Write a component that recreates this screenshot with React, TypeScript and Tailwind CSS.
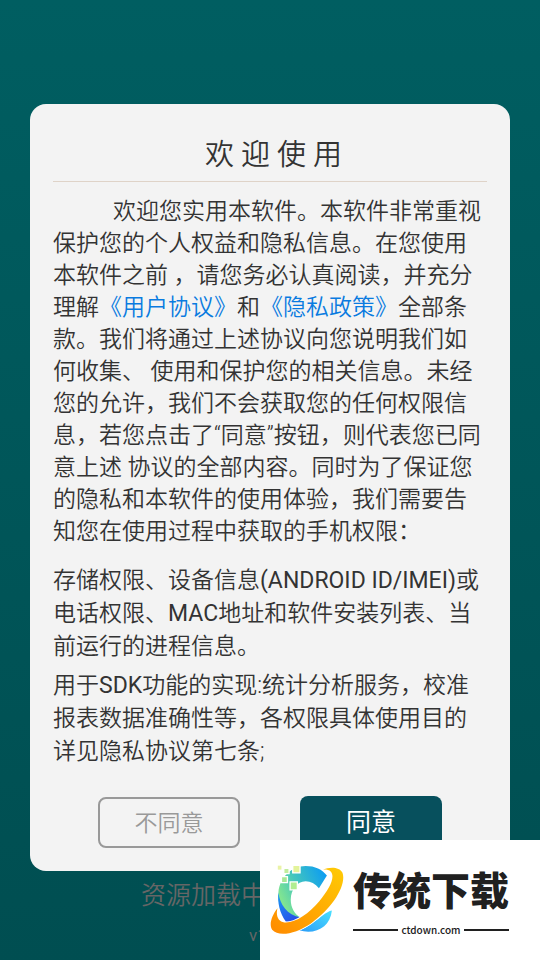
function BrandMark() {
  return (
    <svg viewBox="0 0 240 220" className="h-[73px] w-20 shrink-0" aria-hidden="true">
      <defs>
        <linearGradient id="ring" x1="0" y1="1" x2="1" y2="0">
          <stop offset="0" stopColor="#ff8a00" />
          <stop offset="1" stopColor="#ffcb05" />
        </linearGradient>
        <linearGradient id="arc" x1="0" y1="0.7" x2="1" y2="0.2">
          <stop offset="0" stopColor="#90ec86" />
          <stop offset="0.45" stopColor="#43c6bd" />
          <stop offset="1" stopColor="#0d9df2" />
        </linearGradient>
        <linearGradient id="shade" x1="0" y1="0" x2="0.6" y2="1">
          <stop offset="0" stopColor="#1b9cf4" />
          <stop offset="1" stopColor="#2650e8" />
        </linearGradient>
        <linearGradient id="tail" x1="0" y1="1" x2="1" y2="0">
          <stop offset="0" stopColor="#2b9cf8" />
          <stop offset="1" stopColor="#4be0ff" />
        </linearGradient>
      </defs>
      <path d="M34 84C38 42 72 6 116 6C144 6 166 16 180 35L156 73C145 59 131 52 116 52C89 53 72 77 71 107C71 132 83 152 101 162L72 172C44 150 30 120 34 84Z" fill="url(#arc)" />
      <path d="M34 86C38 122 60 154 101 161C86 172 70 176 56 173C38 149 30 114 34 86Z" fill="url(#shade)" />
      <path d="M195 140C179 143 158 162 138 177C122 189 109 196 96 200C145 214 190 191 195 140Z" fill="url(#tail)" />
      <path d="M166 17C190 8 217 8 227 26C240 65 196 134 132 179C86 210 35 221 15 198C5 183 13 156 31 133C25 157 34 174 52 176C83 179 126 149 157 112C187 76 206 40 192 23C186 17 176 16 166 17Z" fill="url(#ring)" stroke="#fff" strokeWidth="5" paintOrder="stroke" />
      <g stroke="#fff" strokeWidth="4">
        <path d="M77 4h22v23H77z" fill="#e3f39a" />
        <path d="M50 13h16v16H50z" fill="#c1ed9d" />
        <path d="M43 38h18v18H43z" fill="#a8e896" />
        <path d="M69 54h22v24H69z" fill="#b1ed91" />
      </g>
      <path d="M32 5h11v12H32z" fill="#eaf3a6" />
    </svg>
  );
}

function Watermark() {
  return (
    <aside className="absolute right-0 bottom-0 flex h-[120px] w-[280px] items-center bg-white pl-[7px]">
      <BrandMark />
      <div className="ml-[6px] w-[156px] shrink-0 pt-[6px] text-[#202020]">
        <div className="text-center text-[39px] leading-[48px] font-black">传统下载</div>
        <div className="mt-[6px] flex items-center gap-[3px]">
          <span className="h-[2px] flex-1 bg-[#202020]" />
          <span className="font-['Noto_Sans_CJK_SC',sans-serif] text-[10px] leading-4 font-medium">ctdown.com</span>
          <span className="h-[2px] flex-1 bg-[#202020]" />
        </div>
      </div>
    </aside>
  );
}

export default function App() {
  return (
    <div
      lang="zh-CN"
      className="relative min-h-screen bg-linear-to-b from-[#005e61] to-[#004e51] px-[30px] pt-[104px] font-[Roboto,'Noto_Sans_CJK_SC',sans-serif] font-[350] text-[#333]"
    >
      <main className="rounded-2xl bg-[#f3f3f3] px-[23px] pt-[29px] pb-[23px]">
        <h1 className="border-b border-[#dfd3c8] pb-[3px] text-center text-[29px] leading-[45px] font-[350] whitespace-pre">
          {" 欢 迎 使 用"}
        </h1>
        <div className="text-[23px] leading-8">
          <p className="mt-[14px] indent-[60px]">
            欢迎您实用本软件。本软件非常重视保护您的个人权益和隐私信息。在您使用本软件之前 ，请您务必认真阅读，并充分理解
            <a href="#agreement" className="text-[#0a7be0]">《用户协议》</a>和
            <a href="#privacy" className="text-[#0a7be0]">《隐私政策》</a>
            全部条款。我们将通过上述协议向您说明我们如何收集、 使用和保护您的相关信息。未经您的允许，我们不会获取您的任何权限信息，若您点击了“同意”按钮，则代表您已同意上述 协议的全部内容。同时为了保证您的隐私和本软件的使用体验，我们需要告知您在使用过程中获取的手机权限：
          </p>
          <p className="mt-4 leading-[33px]">
            存储权限、设备信息<span className="font-normal">(ANDROID ID/IMEI)</span>或电话权限、
            <span className="font-normal">MAC</span>地址和软件安装列表、当前运行的进程信息。
          </p>
          <p className="mt-[6px] leading-[33px]">
            用于<span className="font-normal">SDK</span>功能的实现:统计分析服务，校准报表数据准确性等，各权限具体使用目的详见隐私协议第七条;
          </p>
        </div>
        <div className="mt-7 flex items-end justify-center gap-[60px]">
          <button type="button" className="h-[51px] w-[142px] rounded-lg border-2 border-[#999] pt-[3px] text-[23px] text-[#999]">
            不同意
          </button>
          <button type="button" className="h-[52px] w-[142px] rounded-lg bg-[#07505d] pt-px text-[25px] font-normal text-white">
            同意
          </button>
        </div>
      </main>
      <footer className="pt-[9px] pl-[111px] text-[#666]">
        <p className="text-[25px] leading-8">资源加载中</p>
        <p className="mt-[11px] pl-[108px] text-[17px] leading-6 font-normal">v1</p>
      </footer>
      <Watermark />
    </div>
  );
}
